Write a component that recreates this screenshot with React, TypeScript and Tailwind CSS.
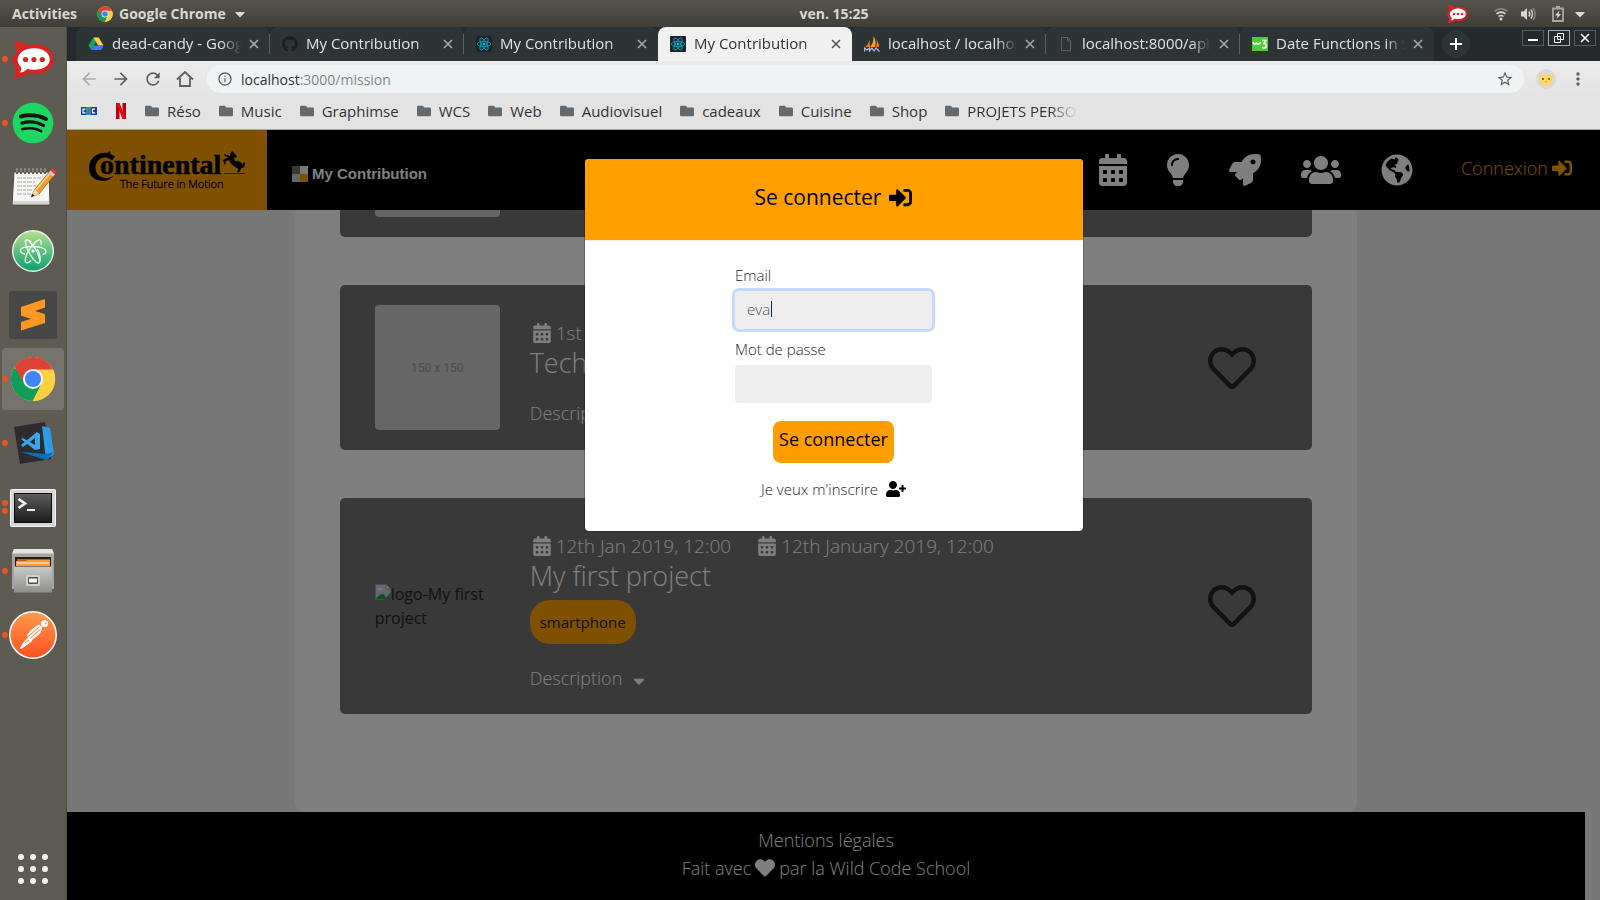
import React from "react";
import {
  FaCalendarAlt,
  FaCaretDown,
  FaFolder,
  FaGithub,
  FaGlobeAmericas,
  FaHeart,
  FaLightbulb,
  FaRegHeart,
  FaRocket,
  FaSignInAlt,
  FaSpotify,
  FaUserPlus,
  FaUsers,
} from "react-icons/fa";
import { MdArrowBack, MdArrowForward, MdInfoOutline, MdMoreVert, MdRefresh, MdStarBorder } from "react-icons/md";

/* ---------- Icons ---------- */

function ChromeIcon({ className }: { className: string }) {
  return (
    <svg viewBox="0 0 48 48" className={className} aria-hidden="true">
      <circle cx="24" cy="24" r="23" fill="#fdd041" />
      <path d="M24 24 L4.1 12.5 A23 23 0 0 0 24 47 L33 29z" fill="#109d58" />
      <path d="M24 24 L33 29 L23.5 47 A23 23 0 0 0 44.9 14 L24 14z" fill="#fdd041" />
      <path d="M4.6 11.6 A23 23 0 0 1 44.7 14 L24 14 L15 28.5z" fill="#db4437" />
      <circle cx="24" cy="24" r="10.5" fill="#f4f4f4" />
      <circle cx="24" cy="24" r="8.4" fill="#4285f4" />
    </svg>
  );
}

function RocketChatIcon({ className }: { className: string }) {
  return (
    <svg viewBox="0 0 46 42" className={className} aria-hidden="true">
      <path
        d="M1 2 C7 0 12 2 16 6 C32 2 45 9 45 21 C45 33 31 39 17 36 C12 40 6 42 1 40 C5 36 6 32 3 28 C0 23 0 18 4 14 C7 9 5 5 1 2z"
        fill="#db2323"
      />
      <path
        d="M24 9 C34 9 41 14 41 21 C41 28 34 32 24 32 C21 32 19 32 17 31 C14 34 12 35 9 35 C11 32 11 30 9 28 C3 21 8 9 24 9z"
        fill="#fff"
      />
      <circle cx="15" cy="21" r="2.8" fill="#db2323" />
      <circle cx="24" cy="21" r="2.8" fill="#db2323" />
      <circle cx="33" cy="21" r="2.8" fill="#db2323" />
    </svg>
  );
}

function SpotifyIcon() {
  return (
    <span className="flex size-[42px] items-center justify-center rounded-full bg-[radial-gradient(circle,#191414_60%,transparent_62%)]">
      <FaSpotify className="size-[42px] text-[#1ed760]" />
    </span>
  );
}

function NotepadIcon() {
  return (
    <svg viewBox="0 0 48 48" className="size-12" aria-hidden="true">
      <path d="M5 9 H40 L41 42 H3z" fill="#f6f6f4" stroke="#4a4843" strokeWidth="1" />
      <path d="M4 38 H40 V41 H4z" fill="#d4d4d0" />
      <path d="M8 5v6M12 5v6M16 5v6M20 5v6M24 5v6M28 5v6M32 5v6M36 5v6" stroke="#3b3b3b" strokeWidth="1.6" />
      <path d="M8 5v4M12 5v4M16 5v4M20 5v4M24 5v4M28 5v4M32 5v4M36 5v4" stroke="#f0f0f0" strokeWidth=".8" />
      <path d="M8 15h24M8 19h18M8 23h20M8 27h15M8 31h14" stroke="#aaa" strokeWidth="1" strokeDasharray="5 1 3 1" />
      <path d="M22 34 L26 26 L42 7 L46 11 L30 31z" fill="#f59b2d" stroke="#9c5b14" strokeWidth=".7" />
      <path d="M27 27 L42 9" stroke="#ffd08a" strokeWidth="1.4" />
      <path d="M22 34 L26 26 L30 31z" fill="#f3d9b0" />
      <path d="M22 34 l1.6-3.2 1.8 2z" fill="#111" />
      <path d="M41 8 L43 6 C45 5 48 8 47 10 L45 12z" fill="#e8323c" />
      <path d="M39.5 10 L41.5 7.6 L46 11.4 L44 13.8z" fill="#c9cbcf" />
    </svg>
  );
}

function AtomIcon() {
  return (
    <svg viewBox="0 0 42 42" className="size-[42px]" aria-hidden="true">
      <defs>
        <linearGradient id="atomFill" x1="0" y1="0" x2="0" y2="1">
          <stop offset="0" stopColor="#b4e08f" />
          <stop offset="1" stopColor="#0aa06e" />
        </linearGradient>
      </defs>
      <circle cx="21" cy="21" r="20.3" fill="url(#atomFill)" stroke="#eef2ee" strokeWidth="1.4" />
      <g fill="none" stroke="#f4fff4" strokeWidth="1.3" strokeLinecap="round">
        <path d="M14 17.3 C24 15 34 17.500 34 21.500 C34 23 32.500 24 31 24.500 M27 17 C15 15.500 8 17.500 8.500 21 C8.800 22.800 10.500 23.600 12.500 24" />
        <path d="M13 11 C14 7.500 20 13 24 20 C28 27.500 29 33.500 26 33 C24 32.600 21 29 18.500 25 C15 19 12.500 13.500 14 11 C15 9.500 17 10 19 11.500" />
        <path d="M29 14 C30 9.500 27 8.500 23 12.500 C17 18.500 12 28 13.500 31.500 C14.500 33.800 17 32.600 18.500 31 M25.500 19.500 C28 24 28.500 28 28 31" />
      </g>
      <circle cx="21" cy="21" r="1.6" fill="#fff" />
    </svg>
  );
}

function SublimeIcon() {
  return (
    <svg viewBox="0 0 48 48" className="size-12" aria-hidden="true">
      <rect width="48" height="48" rx="3" fill="#474747" />
      <path d="M12 31 L36 23.500 V32 L12 39.500z" fill="#ff9820" />
      <path d="M12 24.500 L36 32 V23 L12 16z" fill="#ee8610" />
      <path d="M12 16 L36 8 V16.500 L26 20 L36 23.500 V32 L12 24.500z" fill="#ff9820" />
    </svg>
  );
}

function CodeIcon() {
  return (
    <svg viewBox="0 0 44 44" className="size-11" aria-hidden="true">
      <path d="M3 6 L34 1 L40 38 L9 43z" fill="#2c2c2e" />
      <path d="M31 5 L39 7 L43 33 L35 39z" fill="#2f9be6" />
      <path d="M10 31 L35 33 L43 31 L35 39z" fill="#0a6fc0" />
      <path d="M26 11 L29 13 V28 L24 29 L10 18 L12 17 L24 24 V17 L12 26 L10 24z" fill="#3ba5ea" />
    </svg>
  );
}

function TerminalIcon() {
  return (
    <svg viewBox="0 0 46 40" className="h-10 w-[46px]" aria-hidden="true">
      <defs>
        <linearGradient id="termFill" x1="0" y1="0" x2="0" y2="1">
          <stop offset="0" stopColor="#5c5c5c" />
          <stop offset="1" stopColor="#1c1c1c" />
        </linearGradient>
      </defs>
      <g transform="translate(0 2)">
        <rect x=".5" y=".5" width="45" height="37" rx="1" fill="#d6d6d6" stroke="#f5f5f5" />
        <rect x="4" y="4" width="38" height="30" fill="#0c0c0c" />
        <rect x="5" y="5" width="36" height="28" fill="url(#termFill)" />
        <path d="M8.500 10 L15 14.500 L8.500 19" fill="none" stroke="#f0f0f0" strokeWidth="2.600" />
        <path d="M17 21 H25" stroke="#f0f0f0" strokeWidth="2" />
      </g>
    </svg>
  );
}

function FilesIcon() {
  return (
    <svg viewBox="0 0 42 44" className="h-11 w-[42px]" aria-hidden="true">
      <defs>
        <linearGradient id="filesFill" x1="0" y1="0" x2="0" y2="1">
          <stop offset="0" stopColor="#c9c9c7" />
          <stop offset="1" stopColor="#8f8f8d" />
        </linearGradient>
      </defs>
      <path d="M2 0 H40 L42 5 V40 H0 V5z" fill="#a5a5a3" />
      <path d="M2 0 H40 L42 4.500 H0z" fill="#e4e2e2" />
      <rect x="3" y="8" width="36" height="12" fill="#2b1a12" />
      <path d="M5 10 h33 v7 H5z" fill="#c9531d" />
      <path d="M4 12 h10 l1 -1 h23 v6 H4z" fill="#f0a042" />
      <path d="M5 14 h32" stroke="#fff3dc" strokeWidth="1" />
      <rect x="2" y="17.500" width="38" height="26" fill="url(#filesFill)" />
      <rect x="14" y="26" width="14" height="11" rx="1.500" fill="#cfcfcd" />
      <rect x="16" y="28" width="10" height="7" rx="1" fill="#4d4d4b" />
      <rect x="17" y="29.500" width="8" height="4" fill="#f4f4f2" />
    </svg>
  );
}

function PostmanIcon() {
  return (
    <svg viewBox="0 0 48 48" className="size-12" aria-hidden="true">
      <defs>
        <linearGradient id="postFill" x1="0" y1="0" x2="0" y2="1">
          <stop offset="0" stopColor="#ff9a4a" />
          <stop offset="1" stopColor="#ff5020" />
        </linearGradient>
      </defs>
      <circle cx="24" cy="24" r="23.200" fill="url(#postFill)" stroke="#fff" strokeWidth="1.500" />
      <circle cx="35.500" cy="12.500" r="3.600" fill="#fff" />
      <path d="M33 16 L30 13.500 C25 16 20 20 17.500 25.500 L20 25 L14 32 L10.500 37.500 L12.500 38 L22 31 L24 28 C29 25.500 33 21.500 33 16z" fill="#fff" />
      <path d="M19 25.500 L30 16 M21 27.500 L31 18.500 M16 32 L20 29" stroke="#ff7236" strokeWidth="1" />
      <path d="M36 13 l2 -1.500" stroke="#ff7236" strokeWidth="1" />
    </svg>
  );
}

function ReactFavicon() {
  return (
    <svg viewBox="0 0 16 16" className="size-4 shrink-0" aria-hidden="true">
      <rect width="16" height="16" rx="1" fill="#20232a" />
      <g fill="none" stroke="#00b4cf" strokeWidth=".8">
        <ellipse cx="8" cy="8" rx="6.800" ry="2.600" />
        <ellipse cx="8" cy="8" rx="6.800" ry="2.600" transform="rotate(60 8 8)" />
        <ellipse cx="8" cy="8" rx="6.800" ry="2.600" transform="rotate(120 8 8)" />
      </g>
      <circle cx="8" cy="8" r="1.200" fill="#00d8ff" />
    </svg>
  );
}

function DriveFavicon() {
  return (
    <svg viewBox="0 0 16 16" className="size-4 shrink-0" aria-hidden="true">
      <path d="M5.300 1.500 L8 6 L3.300 14 L.5 9.500z" fill="#11a861" />
      <path d="M5.300 1.500 H10.700 L15.500 9.500 H10.200z" fill="#ffcf48" />
      <path d="M5.800 9.500 H15.500 L13 14 H3.300z" fill="#3f7ff0" />
    </svg>
  );
}

function SailFavicon() {
  return (
    <svg viewBox="0 0 16 16" className="size-4 shrink-0" aria-hidden="true">
      <path d="M1 11 C4 9 5 6 5.500 3 L6 11z" fill="#e87b12" />
      <path d="M6 11 C9 8 9.500 4 9.500 .5 C12 3 12 8 11 11z" fill="#ff9c1a" />
      <path d="M11.500 11 C13 9 13 6 12.500 4 C14.500 6 15.500 9 15 11z" fill="#e87b12" />
      <path d="M.5 15.500 V12 L3 14 5.500 12 V15 L8 12 10 15 12 12 15.500 15.500" fill="none" stroke="#b9b4dc" strokeWidth="1.200" />
    </svg>
  );
}

function FileFavicon() {
  return (
    <svg viewBox="0 0 16 16" className="size-4 shrink-0" fill="none" stroke="#5d6366" strokeWidth="1" aria-hidden="true">
      <path d="M3.500 1.500 H9.500 L12.500 4.500 V14.500 H3.500z M9.500 1.500 V5 H12.500" />
    </svg>
  );
}

function SchoolsFavicon() {
  return (
    <svg viewBox="0 0 16 14" className="h-3.5 w-4 shrink-0" aria-hidden="true">
      <rect width="16" height="14" fill="#4fcb38" />
      <path d="M1 5 C1.500 8 4 8 4.500 5.500 C5 8 8 8 8.500 5 M10 3.500 H14 L12 6.500 C15.500 6.500 15 11 12 11 C11 11 10.300 10.500 10 9.800" fill="none" stroke="#fff" strokeWidth="1.500" />
    </svg>
  );
}

function ContinentalLogo() {
  return (
    <svg viewBox="-1 -2 160 44" className="h-11 w-40" role="img" aria-label="Continental, The Future in Motion">
      <path
        d="M27 6.500 L24 10.500 C17 4 7.500 9 7.500 17.500 C7.500 27 17 30.500 25.500 26 C21 31 14 32.300 8 29.500 C2 26.500 .2 21 1.200 15 C3 5.500 14 .5 22 3.800z"
        fill="#000"
      />
      <path d="M18 4 L22 1 L22.500 5z" />
      <text x="12" y="24" fontFamily="Liberation Serif, serif" fontWeight="700" fontSize="28" stroke="#000" strokeWidth=".5">
        ontinental
      </text>
      <text x="32" y="38" fontFamily="Open Sans, sans-serif" fontSize="11" stroke="#000" strokeWidth=".3">
        The Future in Motion
      </text>
      <path
        d="M144 1 L147 4 L149 6 L148 8 L145.500 7.500 L147 11 C151 10.500 154 12 154.500 15 C155 12 157 11 157 14 C157 17 155 18 153.500 18 L151.500 22 L149 22 L150.500 19 L146.500 16.500 C144 15 142 12.500 141 10 L137 11.500 L138 14 L136.500 14.500 L135 10 L140 7.500 L136 5.500 L137 4 L142 6 L142.500 3.500z"
        fill="#000"
      />
      <path d="M136 23.500 H157" stroke="#000" strokeWidth=".6" />
    </svg>
  );
}

/* ---------- Desktop shell ---------- */

function SystemBar() {
  return (
    <header className="flex h-[27px] shrink-0 items-center justify-between bg-gradient-to-b from-[#56534c] to-[#403e39] pr-3 pl-3 text-[14px] font-bold text-[#dad7d0]">
      <div className="flex flex-1 items-center gap-5">
        <button>Activities</button>
        <button className="flex items-center gap-1.5">
          <ChromeIcon className="size-4" />
          Google Chrome
          <FaCaretDown className="size-4" />
        </button>
      </div>
      <button className="ml-17">ven. 15:25</button>
      <div className="flex flex-1 items-center justify-end">
        <RocketChatIcon className="mr-[26px] h-5 w-[21px]" />
        <svg viewBox="0 0 14 14" className="mr-3 size-3.5" fill="none" stroke="#dad7d0" aria-hidden="true">
          <path d="M.5 4.500 C4 .8 10 .8 13.500 4.500" stroke="#8b8982" strokeWidth="1.600" />
          <path d="M2.500 7 C5 4.500 9 4.500 11.500 7" strokeWidth="1.700" />
          <path d="M4.500 9.500 C6 8.200 8 8.200 9.500 9.500" strokeWidth="1.500" />
          <circle cx="7" cy="12" r="1.500" fill="#dad7d0" stroke="none" />
        </svg>
        <svg viewBox="0 0 16 14" className="mr-4 h-3.5 w-4" fill="none" stroke="#dad7d0" strokeWidth="1.400" aria-hidden="true">
          <path d="M1 4.500 H3.500 L7 1 V13 L3.500 9.500 H1z" fill="#dad7d0" stroke="none" />
          <path d="M8.800 4.500 C10 6 10 8 8.800 9.500 M10.800 2.500 C13 5 13 9 10.800 11.500" />
          <path d="M13 1 C15.800 4 15.800 10 13 13" stroke="#8b8982" />
        </svg>
        <svg viewBox="0 0 12 16" className="mr-2 h-4 w-3" aria-hidden="true">
          <path d="M1 2.500 H11 V15 H1z M4 1 H8" fill="none" stroke="#a9a69f" strokeWidth="1.800" />
          <path d="M7.500 4.500 L3 9.500 H5.500 L4.500 13 L9 8 H6.500z" fill="#dad7d0" />
        </svg>
        <FaCaretDown className="size-4" />
      </div>
    </header>
  );
}

const dockApps = [
  { name: "Rocket.Chat", icon: <RocketChatIcon className="h-[39px] w-11" />, windows: 1 },
  { name: "Spotify", icon: <SpotifyIcon />, windows: 1 },
  { name: "Notes", icon: <NotepadIcon />, windows: 0 },
  { name: "Atom", icon: <AtomIcon />, windows: 0 },
  { name: "Sublime Text", icon: <SublimeIcon />, windows: 0 },
  { name: "Google Chrome", icon: <ChromeIcon className="size-[46px]" />, windows: 1, active: true },
  { name: "Visual Studio Code", icon: <CodeIcon />, windows: 1 },
  { name: "Terminal", icon: <TerminalIcon />, windows: 2 },
  { name: "Files", icon: <FilesIcon />, windows: 1 },
  { name: "Postman", icon: <PostmanIcon />, windows: 1 },
];

function Dock() {
  return (
    <nav aria-label="Dock" className="flex w-[67px] shrink-0 flex-col border-r border-[#504d46] bg-[#5e5b53]">
      {dockApps.map((app) => (
        <button key={app.name} aria-label={app.name} className="relative flex h-16 shrink-0 items-center justify-center p-px">
          <span className={app.active ? "flex size-[62px] items-center justify-center rounded bg-white/15" : "flex"}>
            {app.icon}
          </span>
          <span className="absolute inset-y-0 left-0.5 flex flex-col justify-center gap-0.5">
            {Array.from({ length: app.windows }, (_, i) => (
              <span key={i} className="size-1.5 rounded-full bg-[#e95420]" />
            ))}
          </span>
        </button>
      ))}
      <button aria-label="Show applications" className="mx-auto mt-auto mb-4 grid grid-cols-3 gap-1.5">
        {Array.from({ length: 9 }, (_, i) => (
          <span key={i} className="size-1.5 rounded-full bg-[#f2f1f0]" />
        ))}
      </button>
    </nav>
  );
}

/* ---------- Browser ---------- */

const tabs = [
  { title: "dead-candy - Google", icon: <DriveFavicon /> },
  { title: "My Contribution", icon: <FaGithub className="size-4 shrink-0 text-[#1b1f22]" /> },
  { title: "My Contribution", icon: <ReactFavicon /> },
  { title: "My Contribution", icon: <ReactFavicon />, active: true },
  { title: "localhost / localhost", icon: <SailFavicon /> },
  { title: "localhost:8000/api/m", icon: <FileFavicon /> },
  { title: "Date Functions in SQL", icon: <SchoolsFavicon /> },
];

function TabStrip() {
  return (
    <div className="flex h-[34px] shrink-0 bg-[#252a2d] pl-[9px]">
      {tabs.map((tab, i) => (
        <div
          key={i}
          className={
            tab.active
              ? "flex w-[194px] items-center rounded-t-lg bg-[#f0f0f0] pr-2.5 pl-3 text-[#2d3436]"
              : "flex w-[194px] items-center rounded-t-lg bg-[#2d3436] pr-2.5 pl-3 text-[#dfe3e4]"
          }
        >
          {tab.icon}
          <span className="ml-2 flex-1 overflow-hidden [mask-image:linear-gradient(to_right,black_85%,transparent)] pb-0.5 text-[15px] whitespace-nowrap">
            {tab.title}
          </span>
          <button aria-label="Close tab" className={tab.active ? "ml-2 text-[#50575a]" : "ml-2 text-[#a3a9ab]"}>
            <svg viewBox="0 0 10 10" className="size-2.5" stroke="currentColor" strokeWidth="1.600" aria-hidden="true">
              <path d="M1 1 L9 9 M9 1 L1 9" />
            </svg>
          </button>
          <span className={i < 2 || (i > 3 && i < 6) ? "-mr-2.5 ml-2.5 h-5 w-px bg-[#5a6164]" : "-mr-2.5 ml-2.5 h-5 w-px"} />
        </div>
      ))}
      <button aria-label="New tab" className="ml-2 flex size-7 items-center justify-center self-center rounded-full bg-[#2d3436] text-white">
        <svg viewBox="0 0 12 12" className="size-3" stroke="currentColor" strokeWidth="2" aria-hidden="true">
          <path d="M6 0 V12 M0 6 H12" />
        </svg>
      </button>
      <div className="mt-[3px] mr-1 ml-auto flex gap-1">
        <button aria-label="Minimize" className="flex h-4 w-[22px] items-end justify-center border border-[#565c5f] pb-1">
          <span className="h-0.5 w-2.5 bg-white" />
        </button>
        <button aria-label="Restore" className="flex h-4 w-[22px] items-center justify-center border border-[#a6abad]">
          <svg viewBox="0 0 10 10" className="size-2.5" fill="none" stroke="#fff" aria-hidden="true">
            <path d="M3.500 .5 H9.500 V6.500 H3.500z M.5 3.500 H6.500 V9.500 H.5z" />
          </svg>
        </button>
        <button aria-label="Close" className="flex h-4 w-[22px] items-center justify-center border border-[#565c5f]">
          <svg viewBox="0 0 10 10" className="size-2.5" stroke="#fff" strokeWidth="1.600" aria-hidden="true">
            <path d="M1 1 L9 9 M9 1 L1 9" />
          </svg>
        </button>
      </div>
    </div>
  );
}

function Toolbar() {
  return (
    <div className="flex h-9 shrink-0 items-center bg-gradient-to-b from-[#ebebeb] to-[#e4e4e4] pr-3 pl-3 text-[#5a6063]">
      <div className="flex gap-3">
        <button aria-label="Back" className="text-[#a9adaf]">
          <MdArrowBack className="size-5" />
        </button>
        <button aria-label="Forward">
          <MdArrowForward className="size-5" />
        </button>
        <button aria-label="Reload">
          <MdRefresh className="size-5" />
        </button>
        <button aria-label="Home">
          <svg viewBox="0 0 20 20" className="size-5" fill="none" stroke="currentColor" strokeWidth="1.800" aria-hidden="true">
            <path d="M2 10.500 L10 3 L18 10.500 M5 9 V17 H15 V9" />
          </svg>
        </button>
      </div>
      <div className="ml-3 flex h-7 flex-1 items-center rounded-full bg-[#eff3f4] px-2.5">
        <MdInfoOutline className="size-4 shrink-0" />
        <p className="ml-2 flex-1 text-[14px] text-[#2d3436]">
          localhost<span className="text-[#80878a]">:3000/mission</span>
        </p>
        <button aria-label="Bookmark this page">
          <MdStarBorder className="size-[18px]" />
        </button>
      </div>
      <button aria-label="Profile" className="ml-3 flex size-5 items-center justify-center rounded-full bg-[#d9d9d9]">
        <svg viewBox="0 0 14 14" className="size-3.5" aria-hidden="true">
          <path d="M.5 1 L4 3 H10 L13.500 1 V9 C13 15 1 15 .5 9z" fill="#fad766" />
          <circle cx="4" cy="7" r="1" fill="#5b4a20" />
          <circle cx="10" cy="7" r="1" fill="#5b4a20" />
          <path d="M6 9.500 h2 l-1 1z" fill="#e07d4d" />
        </svg>
      </button>
      <button aria-label="Menu" className="ml-3">
        <MdMoreVert className="size-5" />
      </button>
    </div>
  );
}

const folders = ["Réso", "Music", "Graphimse", "WCS", "Web", "Audiovisuel", "cadeaux", "Cuisine", "Shop"];

function BookmarkFolder({ name, faded }: { name: string; faded?: boolean }) {
  return (
    <button className="flex items-center gap-2">
      <FaFolder className="size-3.5 text-[#63696c]" />
      <span className={faded ? "[mask-image:linear-gradient(to_right,black_75%,transparent)] whitespace-nowrap" : "whitespace-nowrap"}>
        {name}
      </span>
    </button>
  );
}

function BookmarksBar() {
  return (
    <div className="flex h-[33px] shrink-0 items-center gap-[18px] border-b border-[#a5a5a5] bg-[#e3e3e3] pb-1 pl-3.5 text-[15px] text-[#2d3436]">
      <button aria-label="CIC" className="flex h-2 w-4 items-center justify-center bg-[#12418f]">
        <svg viewBox="0 0 16 8" className="h-2 w-4" fill="none" stroke="#fff" strokeWidth="1.200" aria-hidden="true">
          <rect x="5" width="5" height="8" fill="#1795c9" stroke="none" />
          <path d="M4.500 2.200 H2 V5.800 H4.500 M14 2.200 H11.500 V5.800 H14" />
          <path d="M7.700 1.500 V6.500" stroke="#e2322c" strokeWidth="1.600" />
        </svg>
      </button>
      <button aria-label="Netflix">
        <svg viewBox="0 0 12 16" className="h-4 w-3" aria-hidden="true">
          <path d="M1 0 H4.500 V16 H1z M7.500 0 H11 V16 H7.500z" fill="#b1060f" />
          <path d="M1 0 H4.500 L11 16 H7.500z" fill="#e50914" />
        </svg>
      </button>
      {folders.map((f) => (
        <BookmarkFolder key={f} name={f} />
      ))}
      <BookmarkFolder name="PROJETS PERSO" faded />
    </div>
  );
}

/* ---------- Site ---------- */

function SiteHeader() {
  return (
    <header className="flex h-20 shrink-0 items-center bg-black font-light text-white">
      <a href="#" className="flex h-full w-[200px] items-center justify-center bg-[#ffa000]">
        <ContinentalLogo />
      </a>
      <a href="#" className="mt-2 ml-[25px] flex items-center gap-1 font-['Liberation_Sans',sans-serif] text-[15px] font-bold">
        <svg viewBox="0 0 16 16" className="size-4" aria-hidden="true">
          <path d="M0 0 H8 V8 H0z" fill="#737373" />
          <path d="M8 0 H16 V8 H8z" fill="#f2f2f2" />
          <path d="M0 8 H8 V16 H0z" fill="#cdcdcd" />
          <path d="M8 8 H16 V16 H8z" fill="#ffa000" />
        </svg>
        My Contribution
      </a>
      <nav className="mr-7 ml-auto flex items-center gap-10" aria-label="Main">
        <a href="#" aria-label="Events">
          <FaCalendarAlt className="h-8 w-7" />
        </a>
        <a href="#" aria-label="Ideas">
          <FaLightbulb className="h-8 w-[22px]" />
        </a>
        <a href="#" aria-label="Projects">
          <FaRocket className="size-8" />
        </a>
        <a href="#" aria-label="Community">
          <FaUsers className="h-8 w-10" />
        </a>
        <a href="#" aria-label="World">
          <FaGlobeAmericas className="size-8" />
        </a>
        <a href="#" className="ml-2 flex items-center gap-1 pb-1 text-[18px] text-[#ffa000]">
          Connexion <FaSignInAlt className="size-5" />
        </a>
      </nav>
    </header>
  );
}

type Mission = { id: number; dates: string[]; title?: string; tags: string[]; logo: React.ReactNode };

const placeholder = (
  <div className="flex size-[125px] items-center justify-center rounded bg-[#cccccc] font-[Roboto,sans-serif] text-[12px] text-[#969696]">
    150 x 150
  </div>
);

const plainPlaceholder = <div className="size-[125px] rounded bg-[#cccccc]" />;

const brokenLogo = (
  <p className="w-[125px] text-[16px] leading-6 text-[#212529]">
    <svg viewBox="0 0 16 16" className="inline size-4 align-baseline" aria-hidden="true">
      <path d="M.5 .5 H11 L15.500 5 V15.500 H.5z" fill="#c3cfe8" stroke="#9a9a9a" />
      <path d="M11 .5 V5 H15.500z" fill="#fff" stroke="#9a9a9a" />
      <path d="M3 5.500 C3 3.500 6 3 6.500 4.500 C8 4.500 8 6 7 6 H3.500z" fill="#fff" />
      <path d="M1 15 C3 11 6 9.500 9 10.500 L12 15z" fill="#17a62a" />
      <path d="M16 8 L9 16 H16z" fill="#737373" />
    </svg>
    logo-My first project
  </p>
);

const missions: Mission[] = [
  { id: 1, dates: [], tags: [], logo: plainPlaceholder },
  { id: 2, dates: ["1st"], title: "Tech", tags: [], logo: placeholder },
  {
    id: 3,
    dates: ["12th Jan 2019, 12:00", "12th January 2019, 12:00"],
    title: "My first project",
    tags: ["smartphone"],
    logo: brokenLogo,
  },
];

function MissionCard({ mission }: { mission: Mission }) {
  return (
    <article className="flex shrink-0 items-center rounded-[5px] bg-[#737373] py-5 pr-14 pl-[35px]">
      <div className="w-[155px]">{mission.logo}</div>
      {mission.title && (
        <div className="-my-5 flex-1 self-start pt-[34px] pb-[22px] font-light text-white">
          <div className="flex gap-6 text-[19px] leading-7">
            {mission.dates.map((d) => (
              <time key={d} className="flex items-center gap-0.5">
                <FaCalendarAlt className="mx-0.5 size-5" />
                {d}
              </time>
            ))}
          </div>
          <h2 className="text-[27px] leading-8">{mission.title}</h2>
          {mission.tags.length > 0 && (
            <ul className="mt-2 flex gap-2">
              {mission.tags.map((t) => (
                <li key={t} className="rounded-[20px] bg-[#ffa000] p-2.5 text-[15px] leading-6 font-normal text-[#212529]">
                  {t}
                </li>
              ))}
            </ul>
          )}
          <button className="mt-5 flex items-center gap-2 text-[18px] leading-7">
            Description <FaCaretDown className="mt-1.5 size-[18px]" />
          </button>
        </div>
      )}
      <button aria-label="Like" className="ml-auto text-[#212529]">
        <FaRegHeart className="size-12" />
      </button>
    </article>
  );
}

function SiteFooter() {
  return (
    <footer className="mr-[15px] h-[88px] shrink-0 bg-black pt-3.5 text-center text-[18px] leading-7 font-light text-white">
      <a href="#">Mentions légales</a>
      <p className="flex items-center justify-center gap-1">
        Fait avec <FaHeart className="size-5" /> par la Wild Code School
      </p>
    </footer>
  );
}

function LoginDialog() {
  return (
    <div className="absolute inset-0 flex items-start justify-center bg-black/50 pt-7">
      <div
        role="dialog"
        aria-labelledby="login-title"
        className="flex w-[500px] flex-col overflow-hidden rounded-[5px] border border-black/20 bg-white bg-clip-padding"
      >
        <h2 id="login-title" className="flex h-[81px] items-center justify-center gap-2 bg-[#ffa000] pb-1 text-[21px] text-black">
          Se connecter <FaSignInAlt className="size-[23px]" />
        </h2>
        <form className="flex flex-col items-center border-t border-[#e9ecef] pt-[22px] pb-[30px] text-[15px] leading-6 font-light text-[#212529]">
          <div className="flex w-[197px] flex-col">
            <label htmlFor="email">Email</label>
            <div className="relative mt-1 flex flex-col">
              <input
                id="email"
                type="email"
                defaultValue="eva"
                className="h-[38px] w-full rounded bg-[#eeeeee] px-3 pb-0.5 text-[#495057] ring-3 ring-[#c5d9ff] outline-none"
              />
              <span className="absolute top-2.5 left-9 h-4 w-px bg-[#212529]" />
            </div>
            <label htmlFor="password" className="mt-2">
              Mot de passe
            </label>
            <input id="password" type="password" className="mt-1 h-[38px] w-full rounded bg-[#eeeeee] px-3 outline-none" />
          </div>
          <button type="button" className="mt-[18px] h-[42px] rounded-lg bg-[#ff9d00] px-1.5 pb-1.5 text-[18px] font-normal text-black">
            Se connecter
          </button>
          <a href="#" className="mt-3.5 flex items-center gap-2">
            Je veux m'inscrire <FaUserPlus className="h-4 w-5 text-black" />
          </a>
        </form>
      </div>
    </div>
  );
}

export default function App() {
  return (
    <div className="flex h-screen flex-col overflow-hidden font-['Open_Sans','Noto_Sans',sans-serif]">
      <SystemBar />
      <div className="flex min-h-0 flex-1">
        <Dock />
        <div className="flex min-w-0 flex-1 flex-col">
          <TabStrip />
          <Toolbar />
          <BookmarksBar />
          <div className="relative flex min-h-0 flex-1 flex-col bg-[#f0f0f0]">
            <SiteHeader />
            <main className="mr-[15px] flex min-h-0 flex-1 flex-col items-center justify-end overflow-hidden">
              <div className="flex w-[70%] flex-col gap-12 rounded-b-[10px] bg-white px-[45px] pb-[98px]">
                {missions.map((m) => (
                  <MissionCard key={m.id} mission={m} />
                ))}
              </div>
            </main>
            <SiteFooter />
            <LoginDialog />
          </div>
        </div>
      </div>
    </div>
  );
}
